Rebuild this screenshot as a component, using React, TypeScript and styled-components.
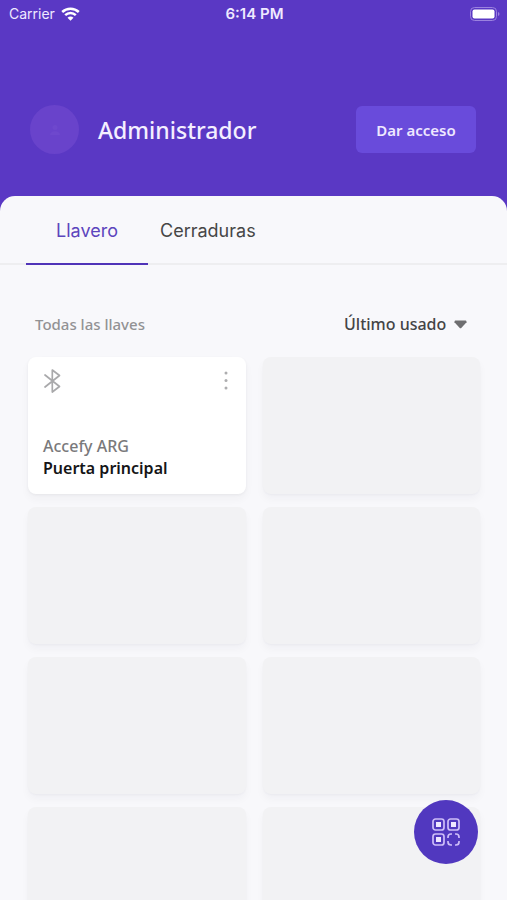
import React, { useState } from "react";
import styled, { createGlobalStyle } from "styled-components";

const GlobalStyle = createGlobalStyle`
  * { box-sizing: border-box; }
  body { margin: 0; background: #5a38c4; }
  button, select { font: inherit; color: inherit; border: 0; padding: 0; background: none; cursor: pointer; }
`;

const Screen = styled.div`
  height: 100vh;
  display: flex;
  flex-direction: column;
  overflow: hidden;
  background: #5a38c4;
  font-family: "Noto Sans", "Open Sans", sans-serif;
`;

const StatusBar = styled.div`
  display: grid;
  grid-template-columns: 1fr auto 1fr;
  align-items: center;
  height: 27px;
  padding: 0 7px 0 9px;
  color: #efe9ff;
  font: 400 14px/20px Inter, sans-serif;
`;

const Carrier = styled.div`
  display: flex;
  align-items: center;
  gap: 6px;
`;

const Clock = styled.time`
  font-size: 15px;
  font-weight: 600;
`;

const Battery = styled.svg`
  justify-self: end;
`;

const Header = styled.header`
  display: flex;
  align-items: center;
  padding: 78px 31px 42px 30px;
`;

const Avatar = styled.div`
  display: grid;
  place-items: center;
  width: 49px;
  height: 49px;
  margin-right: 19px;
  border-radius: 50%;
  background: #6943cb;
`;

const UserName = styled.h1`
  flex: 1;
  margin: 0;
  color: #f4efff;
  font-size: 23px;
  font-weight: 500;
  line-height: 32px;
`;

const AccessButton = styled.button`
  width: 120px;
  height: 47px;
  border-radius: 6px;
  background: #694bdb;
  color: #eee8ff;
  font-size: 15px;
  font-weight: 600;
`;

const Sheet = styled.main`
  flex: 1;
  min-height: 0;
  overflow: hidden;
  border-radius: 15px 15px 0 0;
  background: #f8f8fb;
`;

const Tabs = styled.div`
  display: flex;
  height: 69px;
  padding-left: 26px;
  box-shadow: inset 0 -2px #eeeef0;
`;

const Tab = styled.button<{ $active: boolean }>`
  width: ${(p) => (p.$active ? "122px" : "auto")};
  padding: 2px 12px 0;
  border-bottom: 2px solid ${(p) => (p.$active ? "#5034b8" : "transparent")};
  color: ${(p) => (p.$active ? "#5c45bd" : "#464646")};
  font: 400 18px/24px Inter, sans-serif;
`;

const ListHeader = styled.div`
  display: flex;
  align-items: center;
  justify-content: space-between;
  padding: 47px 40px 21px 35px;
  line-height: 24px;
`;

const ListTitle = styled.h2`
  margin: 0;
  color: #929294;
  font-size: 15px;
  font-weight: 500;
`;

const Sort = styled.label`
  display: flex;
  align-items: center;
  gap: 7px;
`;

const SortSelect = styled.select`
  appearance: none;
  height: 24px;
  color: #444446;
  font-size: 16px;
  font-weight: 500;
`;

const KeyGrid = styled.div`
  display: grid;
  grid-template-columns: 1fr 1fr;
  grid-auto-rows: 137px;
  gap: 13px 17px;
  padding: 0 27px 0 28px;
`;

const Slot = styled.div`
  border-radius: 8px;
  background: #f2f2f4;
  box-shadow: 0 1px 2px rgba(40, 40, 50, 0.03), 0 5px 8px rgba(40, 40, 50, 0.035);
`;

const KeyCard = styled.article`
  display: flex;
  flex-direction: column;
  justify-content: space-between;
  padding: 10px 15px 15px;
  border-radius: 8px;
  background: #fff;
  box-shadow: 0 1px 3px rgba(40, 40, 50, 0.05), 0 5px 8px rgba(40, 40, 50, 0.04);
`;

const CardTop = styled.div`
  display: flex;
  justify-content: space-between;
`;

const MoreButton = styled.button`
  display: grid;
  place-items: center;
  width: 10px;
  height: 27px;
`;

const Place = styled.p`
  margin: 0;
  color: #79797b;
  font-size: 16px;
  font-weight: 500;
  line-height: 22px;
`;

const Door = styled.h3`
  margin: 0;
  color: #151517;
  font-size: 16px;
  font-weight: 600;
  line-height: 22px;
`;

const ScanButton = styled.button`
  position: fixed;
  right: 29px;
  bottom: 36px;
  display: grid;
  place-items: center;
  width: 64px;
  height: 64px;
  border-radius: 50%;
  background: #5138bf;
`;

const TABS = ["Llavero", "Cerraduras"];
const EMPTY_SLOTS = [1, 2, 3, 4, 5, 6, 7];

function WifiIcon() {
  return (
    <svg width="19" height="14" viewBox="0 0 19 14" fill="none" stroke="#fff" strokeWidth="2.5" aria-hidden="true">
      <path d="M1.2 5C5.8 .6 13.2.6 17.8 5" />
      <path d="M4.2 8.2c3-2.9 7.6-2.9 10.6 0" />
      <path d="M6.5 10.7c1.8-1.6 4.2-1.6 6 0l-3 3z" fill="#fff" stroke="none" />
    </svg>
  );
}

function BatteryIcon() {
  return (
    <Battery width="30" height="14" viewBox="0 0 30 14" role="img" aria-label="Batería">
      <rect x=".5" y=".5" width="26" height="13" rx="4" fill="none" stroke="#9b82df" />
      <rect x="2.5" y="2.5" width="22" height="9" rx="2" fill="#fff" />
      <path d="M28 5c2 .7 2 3.3 0 4z" fill="#9b82df" />
    </Battery>
  );
}

function BluetoothIcon() {
  return (
    <svg width="18" height="27" viewBox="0 0 18 27" fill="none" stroke="#a9a9ab" strokeWidth="1.7" strokeLinejoin="round" strokeLinecap="round" role="img" aria-label="Bluetooth">
      <path d="M2 8 16.5 19.5 9.3 25V3L16.5 8.500 2 20" />
    </svg>
  );
}

function QrIcon() {
  return (
    <svg width="28" height="28" viewBox="0 0 28 28" fill="none" stroke="#cdbdf8" strokeWidth="1.7" aria-hidden="true">
      <rect x="1" y="1" width="11" height="11" rx="2.5" />
      <rect x="16" y="1" width="11" height="11" rx="2.5" />
      <rect x="1" y="16" width="11" height="11" rx="2.5" />
      <g fill="#eee6ff" stroke="none">
        <rect x="4" y="4" width="5" height="5" />
        <rect x="19" y="4" width="5" height="5" />
        <rect x="4" y="19" width="5" height="5" />
      </g>
      <path d="M16 20v-1q0-3 3-3h1M23 16h1q3 0 3 3v1M27 23v1q0 3-3 3h-1M20 27h-1q-3 0-3-3v-1" />
    </svg>
  );
}

export default function App() {
  const [active, setActive] = useState(TABS[0]);

  return (
    <Screen>
      <GlobalStyle />
      <StatusBar>
        <Carrier>
          Carrier
          <WifiIcon />
        </Carrier>
        <Clock>6:14 PM</Clock>
        <BatteryIcon />
      </StatusBar>
      <Header>
        <Avatar>
          <svg width="12" height="12" viewBox="0 0 12 12" fill="#6e48cd" aria-hidden="true">
            <circle cx="6" cy="3.5" r="2.5" />
            <path d="M1 11c0-5 10-5 10 0z" />
          </svg>
        </Avatar>
        <UserName>Administrador</UserName>
        <AccessButton type="button">Dar acceso</AccessButton>
      </Header>
      <Sheet>
        <Tabs role="tablist">
          {TABS.map((name) => (
            <Tab key={name} type="button" role="tab" aria-selected={active === name} $active={active === name} onClick={() => setActive(name)}>
              {name}
            </Tab>
          ))}
        </Tabs>
        <ListHeader>
          <ListTitle>Todas las llaves</ListTitle>
          <Sort>
            <SortSelect aria-label="Ordenar llaves">
              <option>Último usado</option>
            </SortSelect>
            <svg width="13" height="9" viewBox="0 0 13 9" fill="#6e6e70" aria-hidden="true">
              <path d="M1.3.5h10.400q1 0 .8 1.700L7.500 7.800q-1 1-2 0L.5 2.200Q.3.500 1.300.5z" />
            </svg>
          </Sort>
        </ListHeader>
        <KeyGrid>
          <KeyCard>
            <CardTop>
              <BluetoothIcon />
              <MoreButton type="button" aria-label="Más opciones">
                <svg width="4" height="19" viewBox="0 0 4 19" fill="#adadaf" aria-hidden="true">
                  <circle cx="2" cy="2" r="1.5" />
                  <circle cx="2" cy="9.5" r="1.5" />
                  <circle cx="2" cy="17" r="1.5" />
                </svg>
              </MoreButton>
            </CardTop>
            <div>
              <Place>Accefy ARG</Place>
              <Door>Puerta principal</Door>
            </div>
          </KeyCard>
          {EMPTY_SLOTS.map((n) => (
            <Slot key={n} />
          ))}
        </KeyGrid>
      </Sheet>
      <ScanButton type="button" aria-label="Escanear código QR">
        <QrIcon />
      </ScanButton>
    </Screen>
  );
}
